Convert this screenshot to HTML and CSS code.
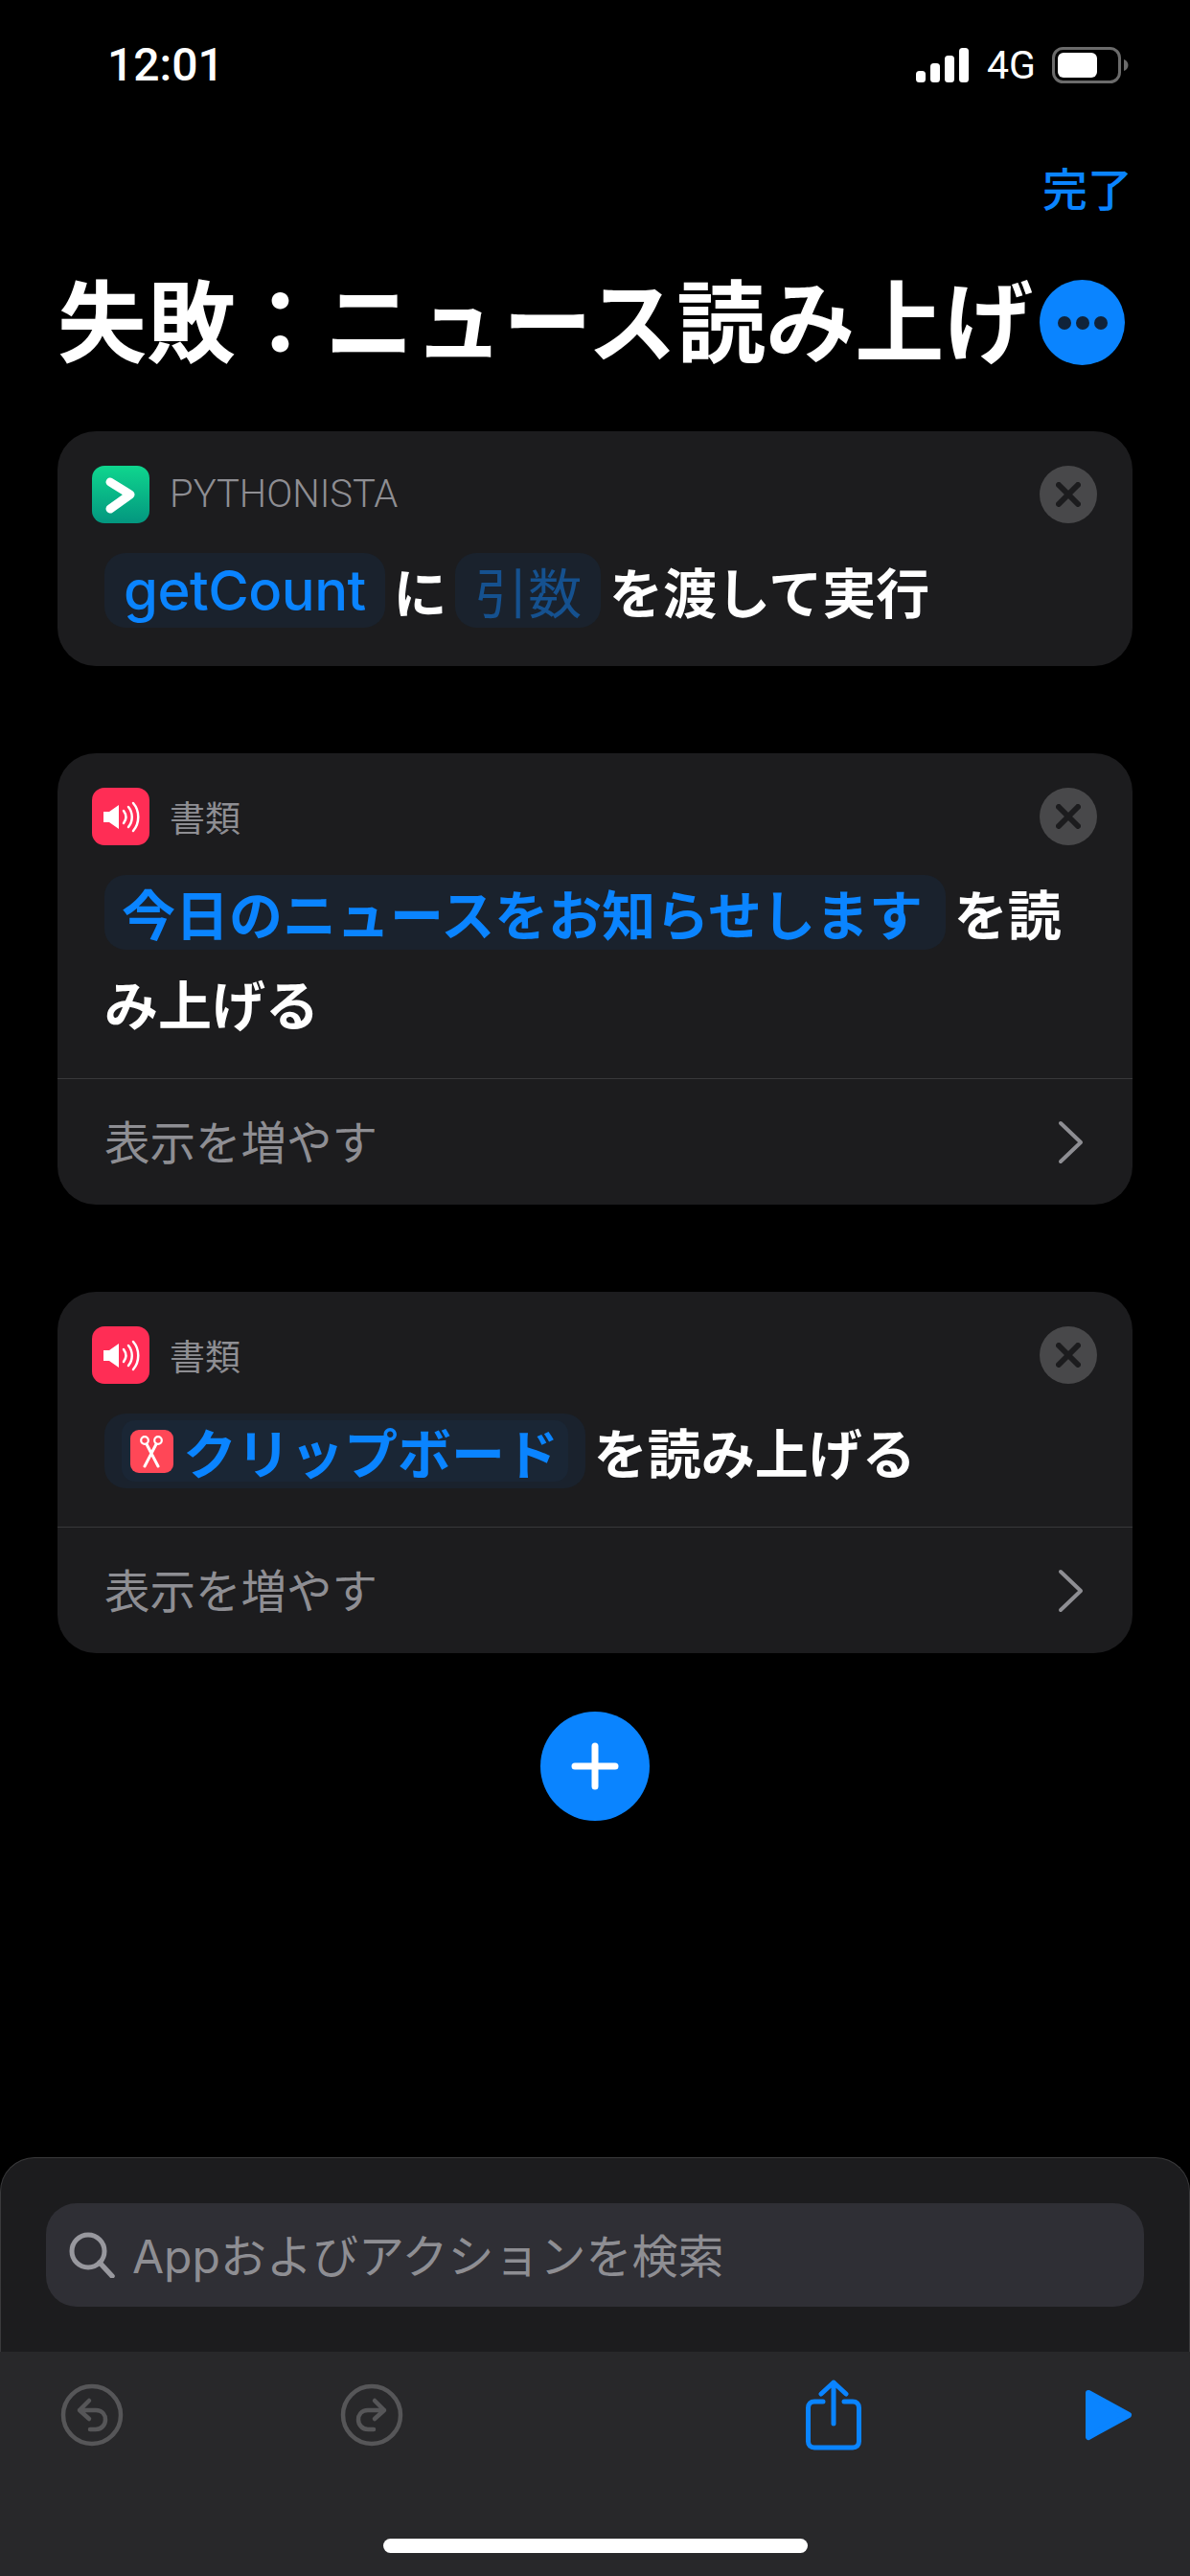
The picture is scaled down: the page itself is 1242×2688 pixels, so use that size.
FILE: index.html
```html
<!DOCTYPE html>
<html lang="ja">
<head>
  <meta charset="utf-8">
  <title>失敗：ニュース読み上げ</title>
  <link rel="stylesheet" href="styles.css">
</head>
<body>
  <div class="screen">

    <div class="status">
      <span class="time">12:01</span>
      <div class="status-right">
        <svg class="signal" width="56" height="36" viewBox="0 0 56 36">
          <rect x="0" y="24" width="10" height="12" rx="3.5" fill="#fff"/>
          <rect x="15" y="16" width="10" height="20" rx="3.5" fill="#fff"/>
          <rect x="30" y="8" width="10" height="28" rx="3.5" fill="#fff"/>
          <rect x="45" y="0" width="10" height="36" rx="3.5" fill="#fff"/>
        </svg>
        <span class="network">4G</span>
        <svg class="battery" width="80" height="38" viewBox="0 0 80 38">
          <rect x="1.5" y="1.5" width="69" height="35" rx="10" fill="none" stroke="#6b6b6b" stroke-width="3"/>
          <rect x="6" y="6" width="41" height="26" rx="6" fill="#fff"/>
          <path d="M75 13c3 1 4.500 3.500 4.500 6s-1.500 5-4.500 6z" fill="#6b6b6b"/>
        </svg>
      </div>
    </div>

    <div class="nav"><span class="done">完了</span></div>

    <div class="title-row">
      <h1 class="title">失敗：ニュース読み上げ</h1>
      <div class="more"><i></i><i></i><i></i></div>
    </div>

    <div class="card">
      <div class="card-head">
        <svg class="app-icon" width="60" height="60" viewBox="0 0 60 60">
          <defs>
            <linearGradient id="py" x1="0" y1="0" x2="0" y2="1">
              <stop offset="0" stop-color="#0fd68e"/>
              <stop offset="1" stop-color="#03967f"/>
            </linearGradient>
          </defs>
          <rect width="60" height="60" rx="13" fill="url(#py)"/>
          <path d="M19 17l21 13-21 15" fill="none" stroke="#fff" stroke-width="9" stroke-linejoin="round" stroke-linecap="round"/>
        </svg>
        <span class="app-name py-name">PYTHONISTA</span>
        <div class="close">
          <svg width="26" height="26" viewBox="0 0 26 26"><path d="M3 3l20 20M23 3L3 23" stroke="#1c1c1e" stroke-width="6" stroke-linecap="round"/></svg>
        </div>
      </div>
      <div class="action"><span class="pill latin">getCount</span> に <span class="pill faded">引数</span> を渡して実行</div>
    </div>

    <div class="card">
      <div class="card-head">
        <svg class="app-icon" width="60" height="60" viewBox="0 0 60 60">
          <rect width="60" height="60" rx="13" fill="#ff2d55"/>
          <path d="M12 25h6l10-7v25l-10-7h-6z" fill="#fff"/>
          <path d="M33 24c3 4 3 9 0 13M38 20c5 6 5 15 0 21M43 16c7 8 7 21 0 29" fill="none" stroke="#fff" stroke-width="2.500" stroke-linecap="round"/>
        </svg>
        <span class="app-name">書類</span>
        <div class="close">
          <svg width="26" height="26" viewBox="0 0 26 26"><path d="M3 3l20 20M23 3L3 23" stroke="#1c1c1e" stroke-width="6" stroke-linecap="round"/></svg>
        </div>
      </div>
      <div class="action"><span class="pill wide">今日のニュースをお知らせします</span> を読み上げる</div>
      <div class="more-row">
        <span>表示を増やす</span>
        <svg width="28" height="46" viewBox="0 0 28 46"><path d="M3 3l21 20L3 43" fill="none" stroke="#8e8e93" stroke-width="4" stroke-linecap="round" stroke-linejoin="round"/></svg>
      </div>
    </div>

    <div class="card">
      <div class="card-head">
        <svg class="app-icon" width="60" height="60" viewBox="0 0 60 60">
          <rect width="60" height="60" rx="13" fill="#ff2d55"/>
          <path d="M12 25h6l10-7v25l-10-7h-6z" fill="#fff"/>
          <path d="M33 24c3 4 3 9 0 13M38 20c5 6 5 15 0 21M43 16c7 8 7 21 0 29" fill="none" stroke="#fff" stroke-width="2.500" stroke-linecap="round"/>
        </svg>
        <span class="app-name">書類</span>
        <div class="close">
          <svg width="26" height="26" viewBox="0 0 26 26"><path d="M3 3l20 20M23 3L3 23" stroke="#1c1c1e" stroke-width="6" stroke-linecap="round"/></svg>
        </div>
      </div>
      <div class="action"><span class="pill outer"><span class="inner"><svg class="clip-icon" width="45" height="45" viewBox="0 0 45 45">
            <rect width="45" height="45" rx="9" fill="#ff4757"/>
            <circle cx="15" cy="11" r="3.800" fill="none" stroke="#fff" stroke-width="2.200"/>
            <circle cx="29" cy="11" r="3.800" fill="none" stroke="#fff" stroke-width="2.200"/>
            <path d="M17 15l12 23M27 15L15 38" stroke="#fff" stroke-width="3" stroke-linecap="round"/>
          </svg>クリップボード</span></span> を読み上げる</div>
      <div class="more-row">
        <span>表示を増やす</span>
        <svg width="28" height="46" viewBox="0 0 28 46"><path d="M3 3l21 20L3 43" fill="none" stroke="#8e8e93" stroke-width="4" stroke-linecap="round" stroke-linejoin="round"/></svg>
      </div>
    </div>

    <div class="add">
      <svg width="50" height="50" viewBox="0 0 50 50"><path d="M25 4v42M4 25h42" stroke="#fff" stroke-width="7" stroke-linecap="round"/></svg>
    </div>

    <div class="sheet">
      <div class="search">
        <svg width="48" height="48" viewBox="0 0 48 48"><circle cx="20" cy="20" r="17" fill="none" stroke="#98989e" stroke-width="5"/><path d="M32 32l13 14" stroke="#98989e" stroke-width="5.500" stroke-linecap="round"/></svg>
        <span class="search-text">Appおよびアクションを検索</span>
      </div>
    </div>

    <div class="toolbar">
      <div class="tools">
        <svg class="undo" width="66" height="66" viewBox="0 0 66 66" fill="none" stroke="#565658" stroke-width="4.500" stroke-linecap="round" stroke-linejoin="round">
          <circle cx="33" cy="33" r="30"/>
          <path d="M30 18l-10 10 10 9M20 28h17c7 0 10 5 10 10s-4 10-10 10h-6"/>
        </svg>
        <svg class="redo" width="66" height="66" viewBox="0 0 66 66" fill="none" stroke="#565658" stroke-width="4.500" stroke-linecap="round" stroke-linejoin="round">
          <circle cx="33" cy="33" r="30"/>
          <path d="M36 18l10 10-10 9M46 28H29c-7 0-10 5-10 10s4 10 10 10h6"/>
        </svg>
        <svg class="share" width="58" height="74" viewBox="0 0 58 74" fill="none" stroke="#0a84ff" stroke-width="5" stroke-linecap="round" stroke-linejoin="round">
          <path d="M29 3v43M16 15L29 3l13 12"/>
          <path d="M18 23H9c-4 0-6.500 2.500-6.500 6.500v35c0 4 2.500 6.500 6.500 6.500h40c4 0 6.500-2.500 6.500-6.500v-35c0-4-2.500-6.500-6.500-6.500h-9"/>
        </svg>
        <svg class="play" width="50" height="56" viewBox="0 0 50 56"><path d="M4 5l42 23L4 51z" fill="#0a84ff" stroke="#0a84ff" stroke-width="6" stroke-linejoin="round"/></svg>
      </div>
      <div class="home-bar"></div>
    </div>

  </div>
</body>
</html>
```

FILE: styles.css
```css
* {
  box-sizing: border-box;
}

body {
  margin: 0;
  background: #000;
  color: #fff;
  font-family: Inter, "Noto Sans CJK JP", sans-serif;
}

.screen {
  display: flex;
  flex-direction: column;
  width: 1242px;
  height: 2688px;
  overflow: hidden;
}

/* status bar */
.status {
  display: flex;
  justify-content: space-between;
  align-items: center;
  height: 100px;
  padding: 36px 64px 0 112px;
}

.time {
  font-family: Roboto, sans-serif;
  font-size: 48px;
  font-weight: 500;
  line-height: 50px;
}

.status-right {
  display: flex;
  align-items: center;
}

.network {
  margin: 0 17px 0 18px;
  font-family: Roboto, sans-serif;
  font-size: 41px;
  line-height: 40px;
}

/* nav */
.nav {
  display: flex;
  justify-content: flex-end;
  padding: 65px 60px 0 0;
}

.done {
  color: #0a84ff;
  font-family: "Noto Sans CJK JP", sans-serif;
  font-size: 47px;
  font-weight: 500;
  line-height: 60px;
}

.title-row {
  display: flex;
  justify-content: space-between;
  align-items: center;
  margin-top: 67px;
  padding: 0 68px 0 60px;
}

.title {
  margin: 0 0 11px;
  font-family: "Noto Sans CJK JP", sans-serif;
  font-size: 93px;
  font-weight: 700;
  line-height: 78px;
  white-space: nowrap;
}

.more {
  display: flex;
  justify-content: center;
  align-items: center;
  gap: 5px;
  flex: none;
  width: 89px;
  height: 89px;
  border-radius: 50%;
  background: #0a84ff;
}

.more i {
  width: 14px;
  height: 14px;
  border-radius: 50%;
  background: #10233a;
}

/* action cards */
.card {
  margin: 91px 60px 0;
  border-radius: 40px;
  background: #1c1c1e;
}

.title-row + .card {
  margin-top: 69px;
}

.card-head {
  display: flex;
  align-items: center;
  padding: 36px 37px 0 36px;
}

.app-name {
  margin-left: 21px;
  color: #8e8e93;
  font-family: "Noto Sans CJK JP", sans-serif;
  font-size: 37px;
  line-height: 44px;
}

.py-name {
  font-family: Roboto, sans-serif;
  font-size: 40px;
  font-weight: 300;
}

.close {
  display: flex;
  justify-content: center;
  align-items: center;
  width: 60px;
  height: 60px;
  margin-left: auto;
  border-radius: 50%;
  background: #48484a;
}

.action {
  margin-top: 23px;
  padding: 0 48px 32px 49px;
  font-family: "Noto Sans CJK JP", sans-serif;
  font-size: 56px;
  font-weight: 700;
  line-height: 94px;
  word-spacing: -4px;
}

.pill {
  display: inline-block;
  height: 78px;
  margin: 8px 0;
  padding: 0 20px;
  border-radius: 22px;
  background: #1a222d;
  color: #0a84ff;
  line-height: 78px;
  vertical-align: top;
}

.wide {
  padding: 0 24px 0 18px;
}

.latin {
  font-family: Inter, sans-serif;
  font-size: 58px;
  font-weight: 500;
  letter-spacing: -0.5px;
}

.faded {
  color: #15518f;
  font-weight: 400;
}

.outer {
  padding: 7px 18px;
  line-height: 64px;
}

.inner {
  display: flex;
  align-items: center;
  height: 64px;
  padding: 0 10px 0 9px;
  border-radius: 14px;
  background: #1a2635;
}

.clip-icon {
  margin-right: 10px;
}

.more-row {
  display: flex;
  justify-content: space-between;
  align-items: center;
  height: 132px;
  padding: 0 50px 0 49px;
  border-top: 1px solid #38383a;
  color: #8e8e93;
  font-family: "Noto Sans CJK JP", sans-serif;
  font-size: 47.5px;
}

.more-row span {
  padding-bottom: 4px;
}

.add {
  display: flex;
  justify-content: center;
  align-items: center;
  width: 114px;
  height: 114px;
  margin: 61px auto 0;
  border-radius: 50%;
  background: #0a84ff;
}

/* bottom sheet */
.sheet {
  margin-top: auto;
  padding: 47px 47px;
  border: 1px solid #3a3a3c;
  border-bottom: none;
  border-radius: 36px 36px 0 0;
  background: #1c1c1e;
}

.search {
  display: flex;
  align-items: center;
  gap: 18px;
  height: 108px;
  padding-left: 24px;
  border-radius: 32px;
  background: #2f2f35;
  color: #8e8e93;
  font-family: Inter, "Noto Sans CJK JP", sans-serif;
  font-size: 48px;
}

.search-text {
  padding-bottom: 5px;
}

.toolbar {
  height: 234px;
  background: #28282a;
}

.tools {
  display: flex;
  align-items: center;
  height: 132px;
  padding-left: 63px;
}

.redo {
  margin-left: 226px;
}

.share {
  margin-left: 420px;
}

.play {
  margin-left: 233px;
}

.home-bar {
  width: 443px;
  height: 15px;
  margin: 63px auto 0;
  border-radius: 8px;
  background: #fff;
}
```
